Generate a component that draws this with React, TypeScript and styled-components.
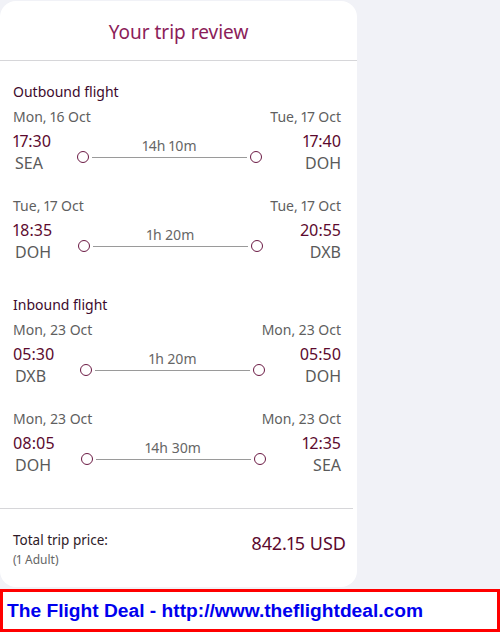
import React from "react";
import styled, { createGlobalStyle } from "styled-components";

const GlobalStyle = createGlobalStyle`
  html, body {
    margin: 0;
    padding: 0;
    background: #f1f2f7;
  }
  body {
    font-family: "Noto Sans", "Open Sans", Arial, sans-serif;
    font-variant-numeric: proportional-nums;
  }
`;

const Page = styled.div`
  width: 500px;
  height: 632px;
  display: flex;
  flex-direction: column;
  background: #f1f2f7;
`;

const Card = styled.div`
  width: 357px;
  height: 586px;
  margin-top: 1px;
  background: #fff;
  border-radius: 16px;
  display: flex;
  flex-direction: column;
  box-sizing: border-box;
`;

const Header = styled.div`
  height: 60px;
  display: flex;
  align-items: center;
  justify-content: center;
  border-bottom: 1px solid #d6d6d9;
  box-sizing: border-box;
`;

const Title = styled.h1`
  margin: 0;
  font-size: 19px;
  font-weight: 400;
  color: #8b1d5a;
  padding-top: 2px;
`;

const Body = styled.div`
  padding: 21px 16px 32px 13px;
  display: flex;
  flex-direction: column;
`;

const Section = styled.section<{ $gap?: number }>`
  display: flex;
  flex-direction: column;
  margin-top: ${(p) => p.$gap ?? 0}px;
`;

const SectionTitle = styled.div`
  font-size: 14px;
  line-height: 20px;
  color: #3d0a2c;
  margin-bottom: 5px;
`;

const Segment = styled.div<{ $first?: boolean }>`
  display: flex;
  flex-direction: column;
  margin-top: ${(p) => (p.$first ? 0 : 22)}px;
`;

const DateRow = styled.div`
  display: flex;
  justify-content: space-between;
  font-size: 14px;
  line-height: 20px;
  color: #5f5f5f;
`;

const TimeRow = styled.div`
  display: flex;
  margin-top: 3px;
`;

const Point = styled.div<{ $right?: boolean }>`
  display: flex;
  flex-direction: column;
  align-items: ${(p) => (p.$right ? "flex-end" : "flex-start")};
  margin-left: ${(p) => (p.$right ? "auto" : "0")};
`;

const Time = styled.div`
  font-size: 16px;
  line-height: 22px;
  color: #5c0a2e;
`;

const Code = styled.div<{ $right?: boolean }>`
  font-size: 16px;
  line-height: 22px;
  color: #5a5a5a;
  padding-left: ${(p) => (p.$right ? 0 : 2)}px;
`;

const Middle = styled.div`
  width: 185px;
  margin-left: 26px;
  margin-top: 8px;
  display: flex;
  flex-direction: column;
  align-items: center;
`;

const Duration = styled.div`
  font-size: 14px;
  line-height: 16px;
  color: #666;
`;

const Track = styled.div`
  width: 100%;
  height: 12px;
  margin-top: -3px;
  display: flex;
  align-items: center;
`;

const Dot = styled.span`
  display: block;
  box-sizing: border-box;
  width: 12px;
  height: 12px;
  border: 1.6px solid #6b1a44;
  border-radius: 50%;
  flex: none;
`;

const Line = styled.span`
  flex: 1;
  height: 1px;
  background: #9a9a9a;
  margin: 0 3px;
`;

const Footer = styled.div`
  margin-right: 4px;
  border-top: 1px solid #d6d6d9;
  padding: 20px 7px 0 13px;
  display: flex;
  justify-content: space-between;
  align-items: flex-start;
`;

const PriceLabel = styled.div`
  display: flex;
  flex-direction: column;
`;

const LabelMain = styled.div`
  font-size: 13.5px;
  line-height: 22px;
  color: #2e1a28;
`;

const LabelSub = styled.div`
  font-size: 12px;
  line-height: 18px;
  color: #666;
`;

const Price = styled.div`
  font-size: 18px;
  line-height: 28px;
  color: #5c0a2e;
`;

const Banner = styled.div`
  margin-top: 2px;
  height: 43px;
  border: 3px solid #ff0000;
  background: #fff;
  box-sizing: border-box;
  display: flex;
  align-items: center;
  padding-left: 4px;
  font-family: "Liberation Sans", Arial, sans-serif;
  font-weight: 700;
  font-size: 19.2px;
  color: #0000ee;
`;

type Leg = {
  depDate: string;
  arrDate: string;
  depTime: string;
  arrTime: string;
  from: string;
  to: string;
  duration: string;
};

const outbound: Leg[] = [
  { depDate: "Mon, 16 Oct", arrDate: "Tue, 17 Oct", depTime: "17:30", arrTime: "17:40", from: "SEA", to: "DOH", duration: "14h 10m" },
  { depDate: "Tue, 17 Oct", arrDate: "Tue, 17 Oct", depTime: "18:35", arrTime: "20:55", from: "DOH", to: "DXB", duration: "1h 20m" },
];

const inbound: Leg[] = [
  { depDate: "Mon, 23 Oct", arrDate: "Mon, 23 Oct", depTime: "05:30", arrTime: "05:50", from: "DXB", to: "DOH", duration: "1h 20m" },
  { depDate: "Mon, 23 Oct", arrDate: "Mon, 23 Oct", depTime: "08:05", arrTime: "12:35", from: "DOH", to: "SEA", duration: "14h 30m" },
];

function LegView({ leg, first }: { leg: Leg; first?: boolean }) {
  return (
    <Segment $first={first}>
      <DateRow>
        <span>{leg.depDate}</span>
        <span>{leg.arrDate}</span>
      </DateRow>
      <TimeRow>
        <Point>
          <Time>{leg.depTime}</Time>
          <Code>{leg.from}</Code>
        </Point>
        <Middle>
          <Duration>{leg.duration}</Duration>
          <Track>
            <Dot />
            <Line />
            <Dot />
          </Track>
        </Middle>
        <Point $right>
          <Time>{leg.arrTime}</Time>
          <Code $right>{leg.to}</Code>
        </Point>
      </TimeRow>
    </Segment>
  );
}

export default function App() {
  return (
    <>
      <GlobalStyle />
      <Page>
        <Card>
          <Header>
            <Title>Your trip review</Title>
          </Header>
          <Body>
            <Section>
              <SectionTitle>Outbound flight</SectionTitle>
              {outbound.map((l, i) => (
                <LegView key={i} leg={l} first={i === 0} />
              ))}
            </Section>
            <Section $gap={32}>
              <SectionTitle>Inbound flight</SectionTitle>
              {inbound.map((l, i) => (
                <LegView key={i} leg={l} first={i === 0} />
              ))}
            </Section>
          </Body>
          <Footer>
            <PriceLabel>
              <LabelMain>Total trip price:</LabelMain>
              <LabelSub>(1 Adult)</LabelSub>
            </PriceLabel>
            <Price>842.15 USD</Price>
          </Footer>
        </Card>
        <Banner>The Flight Deal - http://www.theflightdeal.com</Banner>
      </Page>
    </>
  );
}
